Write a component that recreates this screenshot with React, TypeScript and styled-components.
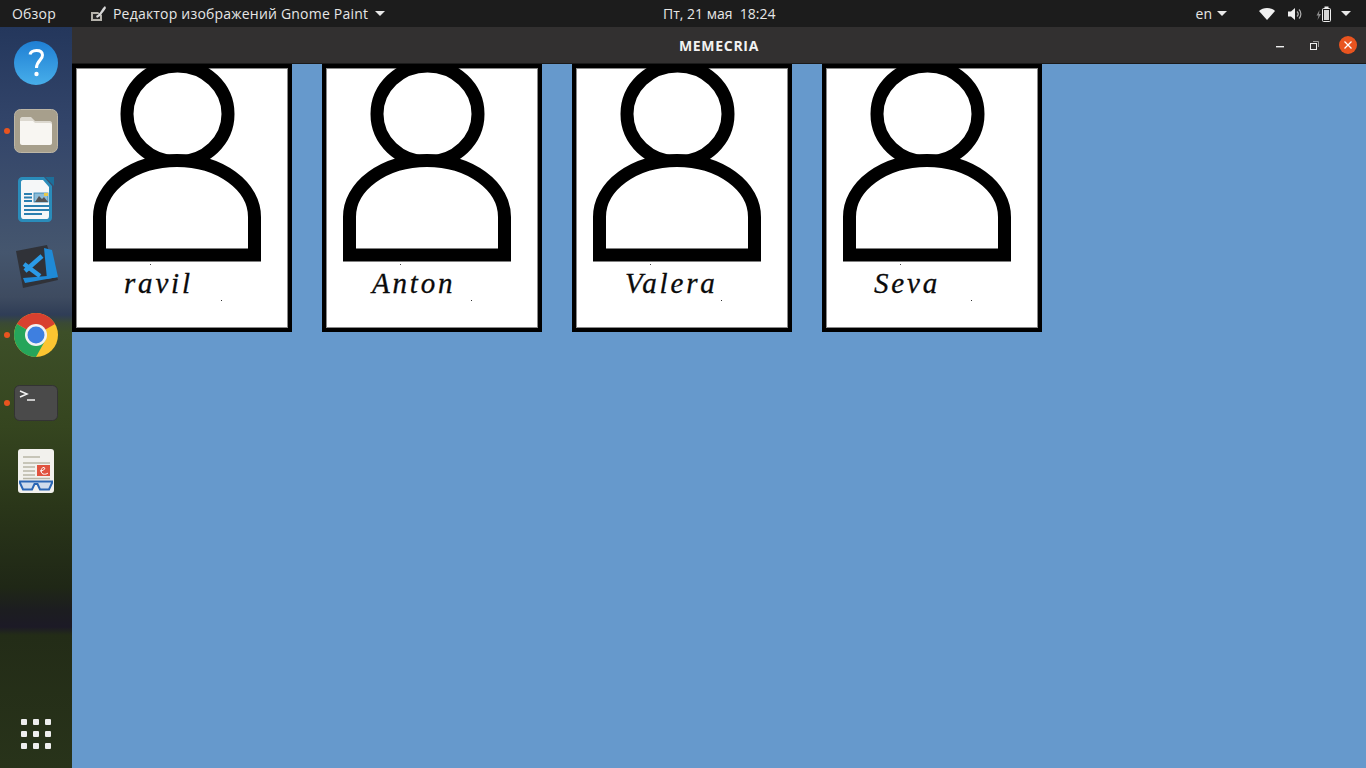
import styled, { createGlobalStyle } from 'styled-components';

const GlobalStyle = createGlobalStyle`
  html, body {
    margin: 0;
    padding: 0;
    height: 100%;
    overflow: hidden;
  }
`;

const Screen = styled.div`
  width: 1366px;
  height: 768px;
  display: flex;
  flex-direction: column;
  font-family: "Open Sans", "Noto Sans", sans-serif;
  overflow: hidden;
`;

const TopBar = styled.header`
  height: 27px;
  flex: none;
  display: grid;
  grid-template-columns: 663px auto 1fr;
  align-items: center;
  background: #1c1c1c;
  color: #e6e6e6;
  font-size: 14px;
`;

const TopLeft = styled.div`
  display: flex;
  align-items: center;
  padding-left: 12px;
  letter-spacing: 0.2px;
`;

const TopRight = styled.div`
  display: flex;
  align-items: center;
  justify-content: flex-end;
  padding-right: 15px;
`;

const ActiveApp = styled.div`
  display: flex;
  align-items: center;
  margin-left: 34px;
  gap: 7px;
`;

const Clock = styled.div`
  font-size: 14px;
  white-space: pre;
`;

const Caret = styled.span<{ $left?: number }>`
  width: 0;
  height: 0;
  margin-left: ${p => p.$left ?? 5}px;
  border-left: 5px solid transparent;
  border-right: 5px solid transparent;
  border-top: 5px solid #e8e8e8;
`;

const Lang = styled.span`
  font-size: 14px;
`;

const TrayIcon = styled.svg<{ $left: number }>`
  display: block;
  margin-left: ${p => p.$left}px;
`;

const Body = styled.div`
  flex: 1;
  display: flex;
  min-height: 0;
`;

const Dock = styled.nav`
  width: 72px;
  flex: none;
  display: flex;
  flex-direction: column;
  align-items: center;
  padding-top: 2px;
  box-sizing: border-box;
  background: linear-gradient(
    180deg,
    #24375c 0px,
    #33456a 100px,
    #45566e 225px,
    #3e4b60 270px,
    #2f3d56 288px,
    #3a4a35 296px,
    #3d4f28 305px,
    #35451f 400px,
    #2a3619 480px,
    #1f2716 560px,
    #1c1d20 583px,
    #1c1a26 600px,
    #232c17 608px,
    #28331a 741px
  );
`;

const DockItem = styled.div`
  position: relative;
  width: 72px;
  height: 68px;
  display: flex;
  align-items: center;
  justify-content: center;
  flex: none;
`;

const RunningDot = styled.span`
  position: absolute;
  left: 4px;
  top: 31px;
  width: 6px;
  height: 6px;
  border-radius: 50%;
  background: #e9541f;
`;

const AppGrid = styled.div`
  margin-top: auto;
  margin-bottom: 19px;
  display: grid;
  grid-template-columns: repeat(3, 6px);
  grid-auto-rows: 6px;
  gap: 6px;
`;

const AppGridDot = styled.span`
  background: #eeeeee;
  border-radius: 1px;
`;

const Window = styled.main`
  flex: 1;
  display: flex;
  flex-direction: column;
  min-width: 0;
`;

const TitleBar = styled.div`
  height: 37px;
  flex: none;
  box-sizing: border-box;
  position: relative;
  display: flex;
  align-items: center;
  justify-content: center;
  background: #323030;
  border-bottom: 1px solid #1a1a1a;
  padding-top: 1px;
`;

const Title = styled.div`
  color: #f2f2f2;
  font-size: 14px;
  font-weight: 700;
  letter-spacing: 0.7px;
`;

const WindowButtons = styled.div`
  position: absolute;
  right: 9px;
  top: 9px;
  display: flex;
  align-items: center;
`;

const MinimizeGlyph = styled.svg`
  display: block;
  margin-top: 4px;
`;

const RestoreGlyph = styled.svg`
  display: block;
  margin-left: 26px;
`;

const CloseButton = styled.div`
  width: 18px;
  height: 18px;
  margin-left: 20px;
  border-radius: 50%;
  background: #e9541f;
  display: flex;
  align-items: center;
  justify-content: center;
`;

const Content = styled.div`
  flex: 1;
  background: #6699cc;
  display: flex;
  align-items: flex-start;
  gap: 30px;
`;

const Card = styled.article`
  position: relative;
  width: 220px;
  height: 268px;
  box-sizing: border-box;
  border: 4px solid #000;
  background: #fff;
  box-shadow: inset 0 0 0 1px #8a8a8a;
  overflow: hidden;
  flex: none;
`;

const Portrait = styled.svg`
  display: block;
  width: 212px;
  height: 198px;
`;

const Name = styled.div<{ $indent: number }>`
  padding-left: ${p => p.$indent}px;
  font-family: "Liberation Serif", serif;
  font-style: italic;
  font-size: 29px;
  line-height: 34px;
  letter-spacing: 2.8px;
  color: #0a0a0a;
  -webkit-text-stroke: 0.3px #0a0a0a;
`;

const Speck = styled.span`
  position: absolute;
  left: 145px;
  top: 232px;
  width: 1px;
  height: 1px;
  background: #333;
`;

const people = [
  { name: 'ravil', indent: 48 },
  { name: 'Anton', indent: 46 },
  { name: 'Valera', indent: 49 },
  { name: 'Seva', indent: 48 },
];

const PersonPicture = () => (
  <Portrait viewBox="0 0 212 198">
    <ellipse cx="101.5" cy="46" rx="50.5" ry="48" fill="none" stroke="#000" strokeWidth="13" />
    <path
      d="M23.5 187 V149 A77.5 56.5 0 0 1 178.5 149 V187 Z"
      fill="#fff"
      stroke="#000"
      strokeWidth="13"
    />
    <rect x="74" y="196" width="1" height="1" fill="#444" />
  </Portrait>
);

const HelpIcon = () => (
  <svg width="44" height="44" viewBox="0 0 44 44">
    <defs>
      <linearGradient id="helpFill" x1="0" y1="0" x2="0" y2="1">
        <stop offset="0" stopColor="#1f7fd4" />
        <stop offset="1" stopColor="#47aeea" />
      </linearGradient>
    </defs>
    <circle cx="22" cy="22" r="22" fill="url(#helpFill)" />
    <path d="M16 13.5 C17 8.5 28 7.5 28.5 14 C28.8 19 22.5 19.5 22.5 27" fill="none" stroke="#fff" strokeWidth="3" />
    <circle cx="22.5" cy="33" r="2.2" fill="#fff" />
  </svg>
);

const FilesIcon = () => (
  <svg width="44" height="44" viewBox="0 0 44 44">
    <rect x="0.5" y="0.5" width="43" height="43" rx="6" fill="#a79f8c" stroke="#bdb6a6" />
    <path d="M6 10 C6 9 7 8 8 8 H17 L21 12 H36 C37 12 38 13 38 14 V18 H6 Z" fill="#dcd8cf" />
    <path d="M6 12 H19 L21 14 H36 C37 14 38 15 38 16 V34 C38 35 37 36 36 36 H8 C7 36 6 35 6 34 Z" fill="#f8f6f2" />
  </svg>
);

const WriterIcon = () => (
  <svg width="36" height="45" viewBox="0 0 36 45">
    <path d="M4 0 H26 L34 9 V41 C34 43 32 45 30 45 H4 C2 45 0 43 0 41 V4 C0 2 2 0 4 0 Z" fill="#2a8cba" />
    <path d="M27 0 H36 V9 Z" fill="#1d6f9a" />
    <path d="M5 3 H25 L31 10 V39 C31 41 30 42 29 42 H5 C4 42 3 41 3 39 V5 C3 4 4 3 5 3 Z" fill="#f5f7f8" />
    <path d="M6 17 H14 M6 20.5 H14 M6 24 H14 M6 29 H31 M6 33 H31 M6 37 H24" stroke="#2a7fb0" strokeWidth="1.8" />
    <rect x="16" y="16" width="14" height="9" fill="#8dbcd8" stroke="#2a7fb0" strokeWidth="0.8" />
    <path d="M17 25 L21 19 L24 22 L26 20 L30 25 Z" fill="#555" />
    <rect x="26" y="16" width="4" height="3" fill="#e6c84a" />
  </svg>
);

const VsCodeIcon = () => (
  <svg width="46" height="44" viewBox="0 0 46 44">
    <path d="M3 6 L34 0 L45 35 L10 43 Z" fill="#303238" />
    <path d="M31 3 L39 5 L45 32 L34 34 Z" fill="#1f8ad6" />
    <path d="M10 33 L34 31 L45 32 L12 38 Z" fill="#1f8ad6" />
    <path d="M29 11 L12 26 M11 19 L27 31" fill="none" stroke="#2a9be8" strokeWidth="4.5" />
  </svg>
);

const ChromeIcon = () => (
  <svg width="44" height="44" viewBox="0 0 44 44">
    <circle cx="22" cy="22" r="22" fill="#fbc531" />
    <path d="M22 22 L3 11 A22 22 0 0 1 41 11 Z" fill="#d8402f" />
    <path d="M22 22 L3 11 A22 22 0 0 0 22 44 L32 26 Z" fill="#26a55a" />
    <circle cx="22" cy="22" r="11" fill="#f2f2f2" />
    <circle cx="22" cy="22" r="8.5" fill="#3e7fe0" />
  </svg>
);

const TerminalIcon = () => (
  <svg width="44" height="36" viewBox="0 0 44 36">
    <rect x="0.5" y="0.5" width="43" height="35" rx="5" fill="#4a4a4a" stroke="#333" />
    <path d="M6 6 L13 9 L6 12" fill="none" stroke="#f2f2f2" strokeWidth="1.5" />
    <path d="M13 15 H21" stroke="#f2f2f2" strokeWidth="1.5" />
  </svg>
);

const ReaderIcon = () => (
  <svg width="36" height="44" viewBox="0 0 36 44">
    <rect x="0" y="0" width="36" height="44" rx="3" fill="#f2f1ed" />
    <path d="M5 8 H22 M5 14 H32 M5 18 H17 M5 22 H17 M5 26 H17 M5 29.5 H32" stroke="#b9b6a6" strokeWidth="1.6" />
    <rect x="19" y="16" width="13" height="11" fill="#e0533f" />
    <path d="M22 22 C26 22 28 19 26 18.5 C23 18 22 24 25 25 C27 25.5 29 25 30 24" fill="none" stroke="#fff" strokeWidth="1" />
    <path d="M2 32.5 H34 V34 L31 40.5 H22 L19.5 35 H16.5 L14 40.5 H5 L2 34 Z" fill="#cfdcec" stroke="#2a66b4" strokeWidth="2" />
  </svg>
);

const PaintIcon = () => (
  <svg width="16" height="17" viewBox="0 0 16 17">
    <path d="M1 7 H8 L12 10 V16 H1 Z" fill="#b5b2ab" />
    <path d="M3 9 H8 L10 11 V14 H3 Z" fill="#262626" />
    <path d="M6 11 L9 9 L13 3 L15 1 L16 3 L14 6 L10 11 L7 13 Z" fill="#d8d8d8" />
  </svg>
);

const App = () => (
  <Screen>
    <GlobalStyle />
    <TopBar>
      <TopLeft>
        <span>Обзор</span>
        <ActiveApp>
          <PaintIcon />
          <span>Редактор изображений Gnome Paint</span>
          <Caret $left={0} />
        </ActiveApp>
      </TopLeft>
      <Clock>{'Пт, 21 мая  18:24'}</Clock>
      <TopRight>
        <Lang>en</Lang>
        <Caret $left={5} />
        <TrayIcon $left={32} width="16" height="12" viewBox="0 0 16 12">
          <path d="M0 3 C4 -1 12 -1 16 3 L8 12 Z" fill="#f0f0f0" />
        </TrayIcon>
        <TrayIcon $left={12} width="16" height="14" viewBox="0 0 16 14">
          <path d="M1 4.5 H4 L8 1 V13 L4 9.5 H1 Z" fill="#f0f0f0" />
          <path d="M10 4.5 C11.5 6 11.5 8 10 9.5 M12 2.5 C14.5 5 14.5 9 12 11.5" fill="none" stroke="#b0b0b0" strokeWidth="1.2" />
        </TrayIcon>
        <TrayIcon $left={13} width="16" height="16" viewBox="0 0 16 16">
          <path d="M3.5 4 L0.5 9.5 H2.5 L1.5 14 L5 8 H3 Z" fill="#8c8c8c" />
          <rect x="6.5" y="2.5" width="8" height="13" rx="1" fill="none" stroke="#efefef" />
          <rect x="8.5" y="0.5" width="4" height="2" fill="#efefef" />
          <rect x="8" y="4" width="5" height="10" fill="#d6d6d6" />
        </TrayIcon>
        <Caret $left={9} />
      </TopRight>
    </TopBar>
    <Body>
      <Dock>
        <DockItem><HelpIcon /></DockItem>
        <DockItem><RunningDot /><FilesIcon /></DockItem>
        <DockItem><WriterIcon /></DockItem>
        <DockItem><VsCodeIcon /></DockItem>
        <DockItem><RunningDot /><ChromeIcon /></DockItem>
        <DockItem><RunningDot /><TerminalIcon /></DockItem>
        <DockItem><ReaderIcon /></DockItem>
        <AppGrid>
          {Array.from({ length: 9 }, (_, i) => <AppGridDot key={i} />)}
        </AppGrid>
      </Dock>
      <Window>
        <TitleBar>
          <Title>MEMECRIA</Title>
          <WindowButtons>
            <MinimizeGlyph width="8" height="2" viewBox="0 0 8 2">
              <rect width="8" height="1.4" fill="#eee" />
            </MinimizeGlyph>
            <RestoreGlyph width="9" height="9" viewBox="0 0 9 9">
              <rect x="0.5" y="2.5" width="6" height="6" fill="none" stroke="#eee" />
              <path d="M3 0.5 H8.5 V6" fill="none" stroke="#999" />
            </RestoreGlyph>
            <CloseButton>
              <svg width="8" height="8" viewBox="0 0 8 8">
                <path d="M0.5 0.5 L7.5 7.5 M7.5 0.5 L0.5 7.5" stroke="#fff" strokeWidth="1.3" />
              </svg>
            </CloseButton>
          </WindowButtons>
        </TitleBar>
        <Content>
          {people.map(p => (
            <Card key={p.name}>
              <PersonPicture />
              <Name $indent={p.indent}>{p.name}</Name>
              <Speck />
            </Card>
          ))}
        </Content>
      </Window>
    </Body>
  </Screen>
);

export default App;
